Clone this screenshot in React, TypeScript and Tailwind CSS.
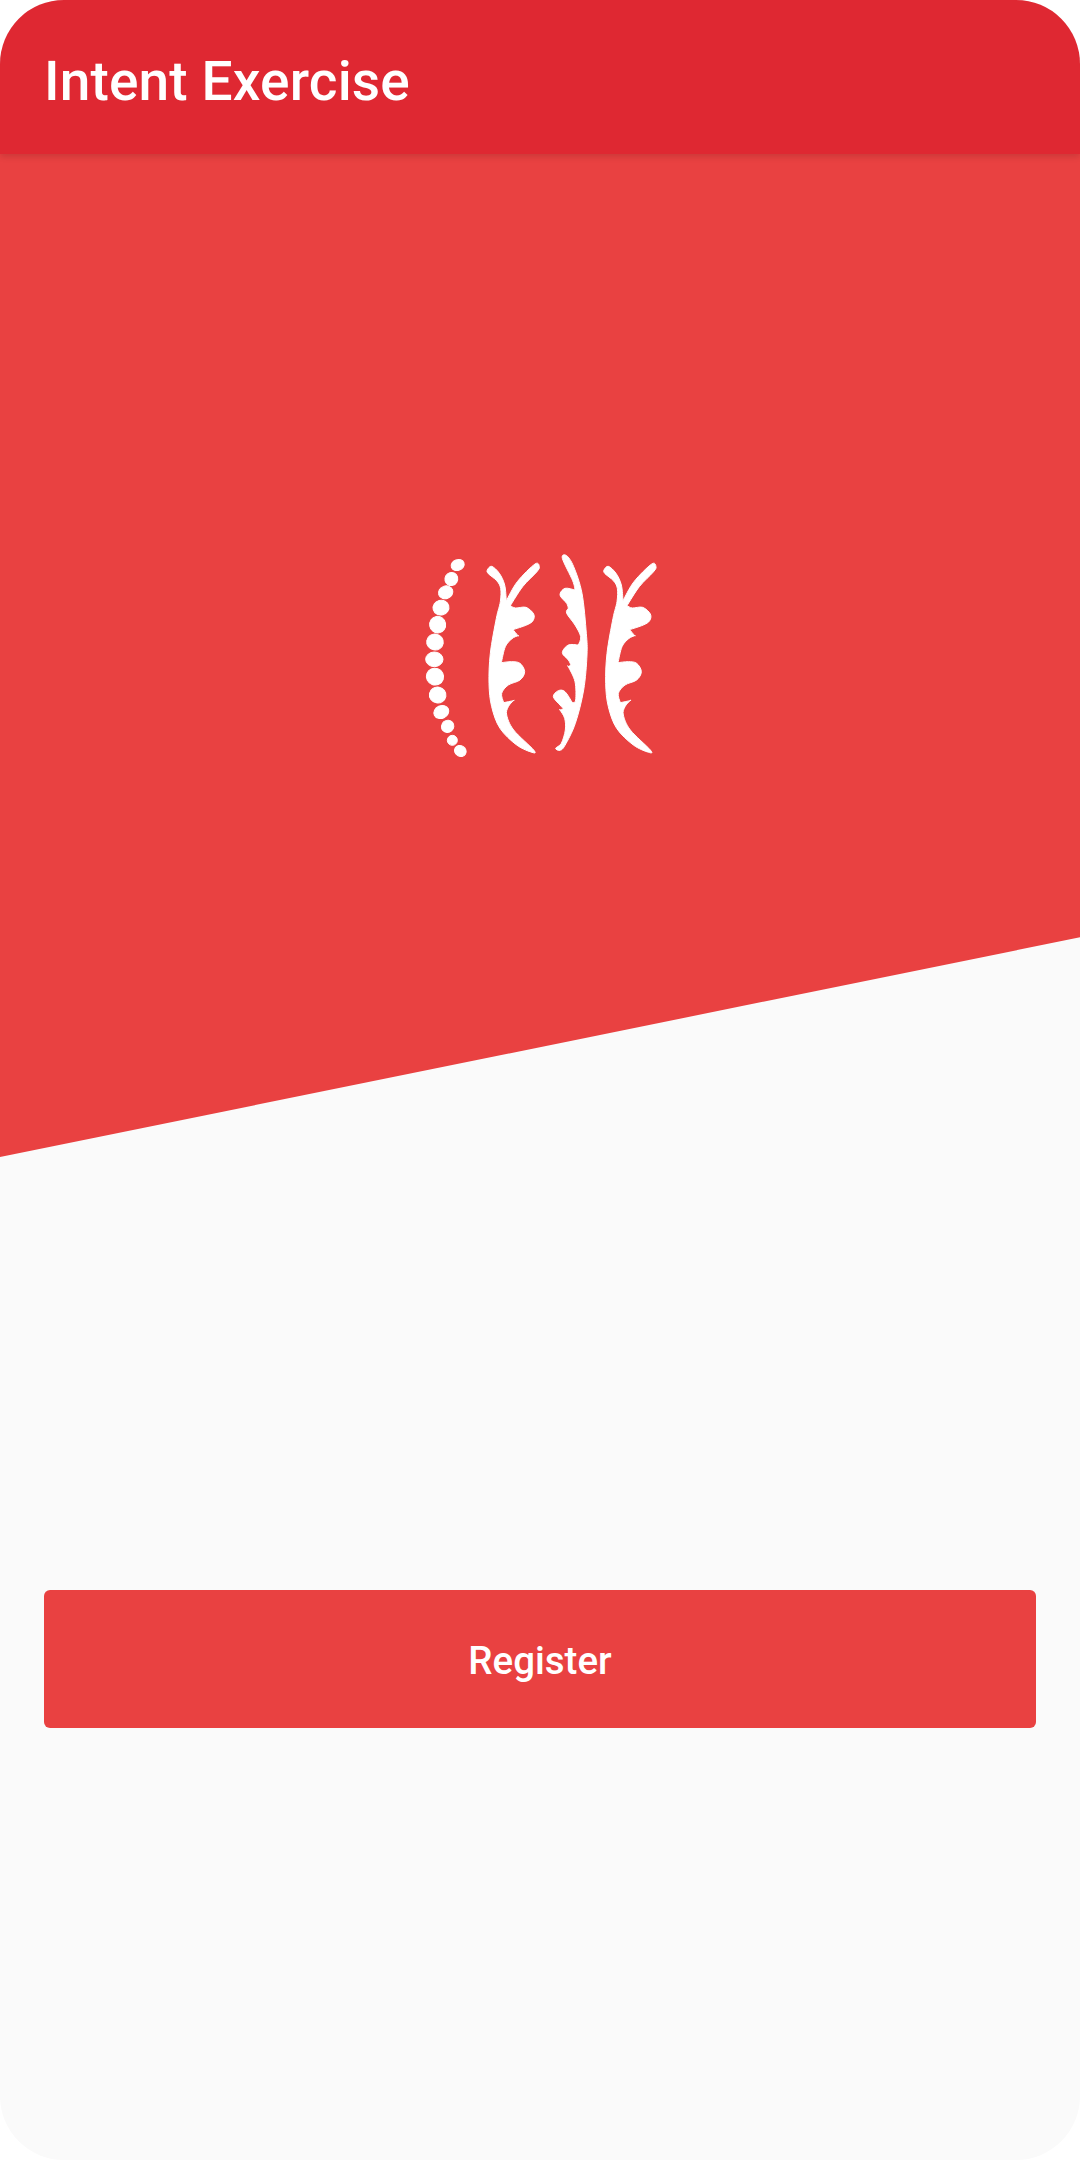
import React from 'react';

const font = "font-['Roboto',sans-serif]";

const dots = [
  [173, 75, 20, 16, -20], [154, 117, 19, 20, 30], [137, 157, 22, 19, -20], [123, 203, 24, 22, -15],
  [113, 254, 24, 25, -10], [105, 306, 25, 24, 10], [103, 358, 26, 22, 0], [105, 410, 26, 25, 20],
  [113, 465, 25, 24, 10], [124, 516, 23, 19, -25], [143, 559, 19, 18, -40], [157, 601, 15, 15, 0], [181, 633, 18, 16, 30],
];

const leafPts = [
  [262, 90], [275, 79], [298, 100], [314, 135], [319, 182], [319, 182], [352, 125], [405, 72], [418, 80], [410, 96],
  [368, 140], [331, 197], [331, 197], [347, 204], [378, 202], [401, 222], [399, 242], [380, 255], [339, 269], [339, 269],
  [354, 287], [354, 287], [336, 296], [316, 320], [304, 368], [304, 368], [335, 365], [360, 370], [374, 395], [360, 420], [325, 435],
  [305, 460], [311, 488], [311, 488], [340, 482], [340, 482], [325, 500], [320, 525], [341, 570], [401, 630], [396, 637],
  [350, 615], [300, 565], [275, 500], [267, 430], [271, 340], [289, 235], [301, 185], [302, 145], [290, 122], [265, 101],
];

const spinePts = [
  [487, 55], [500, 47], [521, 80], [546, 160], [559, 280], [561, 345], [551, 450], [526, 550], [495, 616], [480, 631], [467, 625], [484, 610],
  [496, 570], [494, 535], [480, 510], [480, 510], [490, 506], [490, 506], [480, 495], [460, 470], [475, 452], [495, 455], [517, 488], [517, 488],
  [527, 480], [525, 425], [505, 380], [505, 380], [513, 375], [513, 375], [505, 360], [487, 338], [505, 315], [535, 315], [535, 315], [542, 290], [525, 255],
  [500, 220], [505, 205], [505, 205], [500, 190], [480, 165], [495, 145], [525, 150], [525, 150], [518, 122],
];

// closed catmull-rom through the traced points
const smooth = (pts: number[][]) => {
  const n = pts.length;
  let d = `M${pts[0][0]} ${pts[0][1]}`;
  for (let i = 0; i < n; i++) {
    const p0 = pts[(i - 1 + n) % n];
    const p1 = pts[i];
    const p2 = pts[(i + 1) % n];
    const p3 = pts[(i + 2) % n];
    const c1 = [p1[0] + (p2[0] - p0[0]) / 6, p1[1] + (p2[1] - p0[1]) / 6];
    const c2 = [p2[0] - (p3[0] - p1[0]) / 6, p2[1] - (p3[1] - p1[1]) / 6];
    d += ` C${c1[0]} ${c1[1]} ${c2[0]} ${c2[1]} ${p2[0]} ${p2[1]}`;
  }
  return d + ' Z';
};

const Logo = () => (
  <svg viewBox="0 0 840 660" className="w-[280px] h-[220px]" fill="white" stroke="white" strokeWidth="3" strokeLinejoin="round">
    {dots.map(([cx, cy, rx, ry, r]) => (
      <ellipse key={cy} cx={cx} cy={cy} rx={rx} ry={ry} transform={`rotate(${r} ${cx} ${cy})`}/>
    ))}
    <path d={smooth(leafPts)}/>
    <path d={smooth(spinePts)}/>
    <path d={smooth(leafPts)} transform="translate(350 0)"/>
  </svg>
);

const App = () => {
  return (
    <div className="w-[1080px] h-[2160px] bg-white">
      <div className={`h-full bg-[#fafafa] rounded-[64px] overflow-hidden [text-rendering:geometricPrecision] ${font}`}>
        <div className="relative z-10 h-[154px] bg-[#df2832] flex items-center pl-[44px] pt-[10px] shadow-[0_3px_6px_rgba(0,0,0,0.12)]">
          <span className="text-[55px] leading-none font-medium tracking-[0.15px] text-white">Intent Exercise</span>
        </div>
        <div className="h-[1003px] bg-[#e94141] [clip-path:polygon(0_0,100%_0,100%_78.1%,0_100%)] flex justify-center pt-[386px]">
          <div><Logo/></div>
        </div>
        <div className="px-[44px] mt-[433px]">
          <button className="w-full h-[138px] pt-[3px] bg-[#e94141] rounded-[6px] text-white text-[38.5px] font-medium flex items-center justify-center">
            Register
          </button>
        </div>
      </div>
    </div>
  );
};

export default App;
